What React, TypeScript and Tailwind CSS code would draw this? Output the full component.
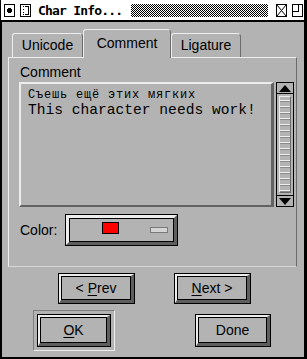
import React from 'react';

// ─── Pieces ───────────────────────────────────────────────────────
function Bevel({ className, children }: { className: string; children: React.ReactNode }) {
  return (
    <div className={`border border-black ${className}`}>
      <div className="h-full border-t-2 border-l-2 border-r-[3px] border-b-[3px] border-t-[#ededed] border-l-[#ededed] border-r-[#5e5e5e] border-b-[#5e5e5e]">
        <div className="h-full border border-black flex items-center justify-center text-[14px] text-black whitespace-nowrap">
          {children}
        </div>
      </div>
    </div>
  );
}

function TitleIcon({ kind }: { kind: 'dot' | 'scroll' | 'close' | 'max' }) {
  return (
    <svg width="11" height="13" viewBox="0 0 11 13" className="block shrink-0" shapeRendering="crispEdges">
      <rect x="0.5" y="0.5" width="10" height="12" fill="white" stroke="black" />
      {kind === 'dot' && <circle cx="5.5" cy="6.5" r="2.6" fill="black" />}
      {kind === 'scroll' && (
        <g stroke="black" fill="none">
          <path d="M3.5 2v1M3.5 5v1M3.5 8v1M3.5 10v1" />
          <path d="M5 2.5h3.5v8H5" />
        </g>
      )}
      {kind === 'close' && <path d="M1 1L10 12M10 1L1 12" stroke="black" fill="none" shapeRendering="auto" />}
      {kind === 'max' && <path d="M6.5 1v6.5H1" stroke="black" fill="none" />}
    </svg>
  );
}

function Tab({ className, label }: { className: string; label: string }) {
  return (
    <div
      className={`flex items-center justify-center border-t border-l border-r border-t-[#ededed] border-l-[#ededed] border-r-[#6b6b6b] rounded-tl-[3px] rounded-tr-[4px] text-[14px] text-black ${className}`}
    >
      {label}
    </div>
  );
}

function Arrow({ up }: { up: boolean }) {
  return (
    <div className={`h-[11px] flex items-center justify-center ${up ? 'border-b border-black' : 'border-t border-black'}`}>
      <svg width="12" height="7" viewBox="0 0 12 7">
        {up ? <polygon points="6,0 12,7 0,7" fill="black" /> : <polygon points="0,0 12,0 6,7" fill="black" />}
      </svg>
    </div>
  );
}

export default function App() {
  return (
    <div className="w-[307px] h-[359px] bg-black flex flex-col font-['Liberation_Sans',Arial,sans-serif]">
      {/* Title bar */}
      <div className="h-[20px] ml-[1px] mr-[3px] bg-white flex items-center pl-[3px] overflow-hidden">
        <TitleIcon kind="dot" />
        <div className="ml-[5px] shrink-0">
          <TitleIcon kind="scroll" />
        </div>
        <span className="ml-[7px] w-[84px] shrink-0 whitespace-nowrap text-[13px] tracking-[-0.8px] font-bold text-black font-['DejaVu_Sans_Mono',monospace] leading-none">
          Char Info...
        </span>
        <div className="ml-[9px] shrink-0 w-[137px] h-[13px] bg-[repeating-conic-gradient(#000_0_25%,#fff_0_50%)] bg-[length:2px_2px]" />
        <div className="ml-[8px] shrink-0">
          <TitleIcon kind="close" />
        </div>
        <div className="ml-[5px] shrink-0">
          <TitleIcon kind="max" />
        </div>
      </div>

      {/* Body */}
      <div className="mt-[2px] ml-[2px] mr-[3px] h-[335px] bg-[#b3b3b3] flex flex-col pl-[6px] pr-[7px]">
        {/* Tabs */}
        <div className="mt-[7px] h-[28px] flex items-end pl-[4px] relative z-10">
          <Tab className="w-[71px] h-[24px]" label="Unicode" />
          <Tab className="w-[88px] h-[29px] -mb-[1px] bg-[#b3b3b3] pb-[2px]" label="Comment" />
          <Tab className="w-[70px] h-[24px]" label="Ligature" />
        </div>

        {/* Panel */}
        <div className="h-[210px] border border-t-[#ededed] border-l-[#ededed] border-r-[#6b6b6b] border-b-[#d6d6d6] flex flex-col pl-[10px]">
          <div className="mt-[6px] ml-[1px] h-[16px] leading-[16px] text-[14px] text-black">Comment</div>

          <div className="mt-[2px] flex gap-[2px]">
            <div className="w-[255px] h-[125px] border-t-2 border-l-2 border-r-[3px] border-b-2 border-t-[#ededed] border-l-[#ededed] border-r-[#626262] border-b-[#626262] pl-[7px] pt-[4px] font-['Liberation_Mono','Courier_New',monospace] text-black">
              <div className="text-[12px] leading-[14px] tracking-[0.8px]">Съешь ещё этих мягких</div>
              <div className="text-[14.6px] leading-[16px]">This character needs work!</div>
            </div>

            {/* Scrollbar */}
            <div className="w-[18px] h-[125px] border border-black flex flex-col">
              <Arrow up />
              <div className="flex-1 px-[2px] py-[2px]">
                <div className="h-full border border-t-[#ededed] border-l-[#ededed] border-r-[#6b6b6b] border-b-[#6b6b6b] bg-[repeating-linear-gradient(to_bottom,transparent_0_3px,#eeeeee_3px_4px,#8c8c8c_4px_5px,transparent_5px_6px)]" />
              </div>
              <Arrow up={false} />
            </div>
          </div>

          {/* Color row */}
          <div className="mt-[7px] flex items-center">
            <span className="ml-[1px] text-[14px] text-black">Color:</span>
            <div className="ml-[8px] w-[113px] h-[32px] border border-black">
              <div className="h-full border-[3px] border-t-[#ededed] border-l-[#ededed] border-r-[#5e5e5e] border-b-[#5e5e5e]">
                <div className="h-full border border-black flex items-start pl-[32px]">
                  <div className="mt-[3px] w-[17px] h-[12px] bg-[#ff0000] border border-black" />
                  <div className="mt-[8px] ml-[31px] w-[18px] h-[6px] bg-[#d4d4d4] border border-[#7a7a7a]" />
                </div>
              </div>
            </div>
          </div>
        </div>

        {/* Prev / Next */}
        <div className="mt-[6px] flex pl-[50px] gap-[39px]">
          <Bevel className="w-[77px] h-[31px]">
            &lt;&nbsp;<span className="underline underline-offset-2">P</span>rev
          </Bevel>
          <Bevel className="w-[77px] h-[31px]">
            <span className="underline underline-offset-2">N</span>ext &gt;
          </Bevel>
        </div>

        {/* OK / Done */}
        <div className="mt-[6px] flex items-center pl-[25px]">
          <div className="w-[82px] h-[41px] border border-t-[#7e7e7e] border-l-[#7e7e7e] border-r-[#ededed] border-b-[#ededed] p-[3px]">
            <Bevel className="w-full h-full">
              <span className="underline underline-offset-2">O</span>K
            </Bevel>
          </div>
          <Bevel className="ml-[80px] w-[76px] h-[33px]">Done</Bevel>
        </div>
      </div>
    </div>
  );
}
